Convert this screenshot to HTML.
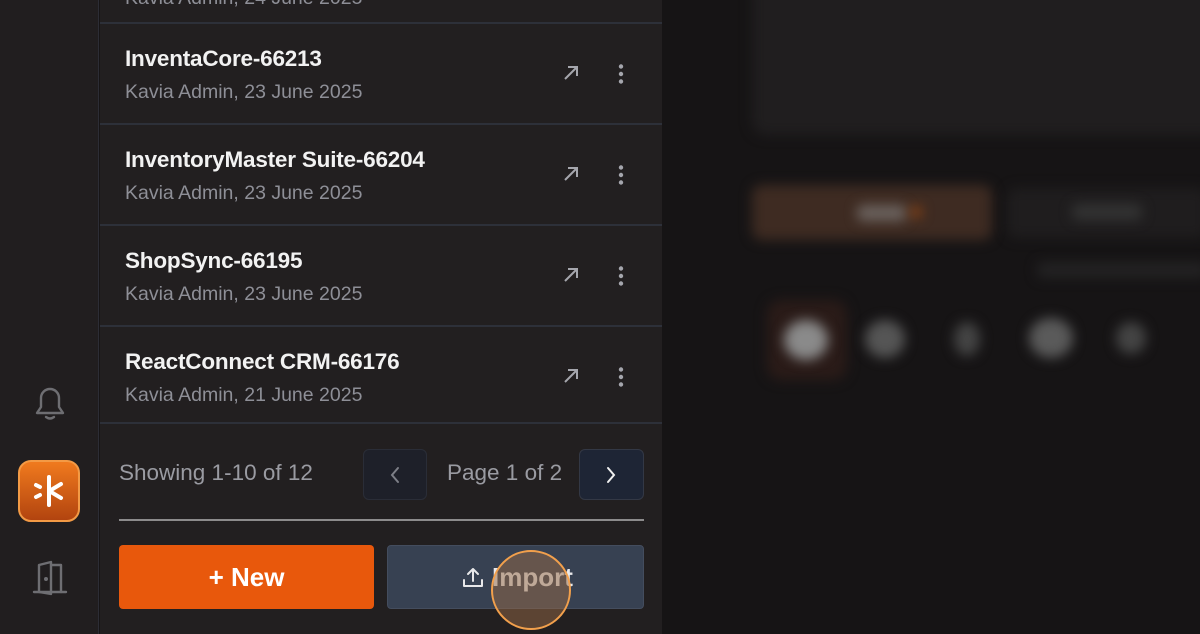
<!DOCTYPE html>
<html><head><meta charset="utf-8"><style>
*{margin:0;padding:0;box-sizing:border-box}
body{width:1200px;height:634px;overflow:hidden;background:#171516;font-family:"Liberation Sans",sans-serif;position:relative}
.side{position:absolute;left:0;top:0;width:99px;height:634px;background:#211e1f;border-right:1px solid #2c2d35}
.panel{position:absolute;left:100px;top:0;width:562px;height:634px;background:#221f20}
.row{position:absolute;left:0;width:562px;height:101px;border-bottom:2px solid #2d3039}
.t{position:absolute;left:25px;top:22px;color:#f2f2f2;font-size:22.5px;font-weight:bold;letter-spacing:-0.2px}
.s{position:absolute;left:25px;top:57px;color:#8e8f97;font-size:19.5px}
.ic{position:absolute;top:40px}
.right{position:absolute;left:662px;top:0;width:538px;height:634px;background:#161415;overflow:hidden}
.bl{filter:blur(6px);position:absolute}
</style></head><body>
<div class="side">
<svg style="position:absolute;left:31px;top:383px" width="38" height="40" viewBox="0 0 38 40" fill="none" stroke="#6e6e72" stroke-width="2.4" stroke-linecap="round" stroke-linejoin="round"><path d="M6 30 L32 30 L28 24 L28 15 A9 9 0 0 0 10 15 L10 24 Z"/><path d="M15 34 Q19 37 23 34"/></svg>
<div style="position:absolute;left:18px;top:460px;width:62px;height:62px;border-radius:13px;background:linear-gradient(#f07a1e,#b2440f);border:2px solid #f39a45"></div>
<svg style="position:absolute;left:18px;top:460px" width="62" height="62" viewBox="0 0 62 62" stroke="#fff" stroke-width="4" stroke-linecap="round"><path d="M31 17 L31 45"/><path d="M33 30 L43 24"/><path d="M33 32 L43 38"/><path d="M18 25 L22 27"/><path d="M18 37 L22 35"/></svg>
<svg style="position:absolute;left:31px;top:560px" width="38" height="36" viewBox="0 0 38 36" fill="none" stroke="#6e6e72" stroke-width="2.4" stroke-linecap="round" stroke-linejoin="round"><path d="M3 32 L35 32"/><path d="M8 32 L8 5 L20 2 L20 34 L8 32"/><path d="M20 5 L30 5 L30 32"/><circle cx="15" cy="19" r="0.8" fill="#6e6e72"/></svg>
</div>
<div class="panel">
<div style="position:absolute;left:25px;top:-13px;color:#8e8f97;font-size:19.5px">Kavia Admin, 24 June 2025</div>
<div style="position:absolute;left:0;top:22px;width:562px;height:2px;background:#2d3039"></div>
<div class="row" style="top:24px"><div class="t">InventaCore-66213</div><div class="s">Kavia Admin, 23 June 2025</div>
<svg class="ic" style="left:462px" width="18" height="18" viewBox="0 0 18 18" stroke="#a5a6ad" stroke-width="2" fill="none"><path d="M3 15 L15 3 M6 3 L15 3 L15 12"/></svg>
<svg class="ic" style="left:516px" width="10" height="20" viewBox="0 0 10 20" fill="#a5a6ad"><circle cx="5" cy="2.5" r="2.2"/><circle cx="5" cy="10" r="2.2"/><circle cx="5" cy="17.5" r="2.2"/></svg></div>
<div class="row" style="top:125px"><div class="t">InventoryMaster Suite-66204</div><div class="s">Kavia Admin, 23 June 2025</div>
<svg class="ic" style="left:462px" width="18" height="18" viewBox="0 0 18 18" stroke="#a5a6ad" stroke-width="2" fill="none"><path d="M3 15 L15 3 M6 3 L15 3 L15 12"/></svg>
<svg class="ic" style="left:516px" width="10" height="20" viewBox="0 0 10 20" fill="#a5a6ad"><circle cx="5" cy="2.5" r="2.2"/><circle cx="5" cy="10" r="2.2"/><circle cx="5" cy="17.5" r="2.2"/></svg></div>
<div class="row" style="top:226px"><div class="t">ShopSync-66195</div><div class="s">Kavia Admin, 23 June 2025</div>
<svg class="ic" style="left:462px" width="18" height="18" viewBox="0 0 18 18" stroke="#a5a6ad" stroke-width="2" fill="none"><path d="M3 15 L15 3 M6 3 L15 3 L15 12"/></svg>
<svg class="ic" style="left:516px" width="10" height="20" viewBox="0 0 10 20" fill="#a5a6ad"><circle cx="5" cy="2.5" r="2.2"/><circle cx="5" cy="10" r="2.2"/><circle cx="5" cy="17.5" r="2.2"/></svg></div>
<div class="row" style="top:327px;height:97px"><div class="t">ReactConnect CRM-66176</div><div class="s">Kavia Admin, 21 June 2025</div>
<svg class="ic" style="left:462px" width="18" height="18" viewBox="0 0 18 18" stroke="#a5a6ad" stroke-width="2" fill="none"><path d="M3 15 L15 3 M6 3 L15 3 L15 12"/></svg>
<svg class="ic" style="left:516px" width="10" height="20" viewBox="0 0 10 20" fill="#a5a6ad"><circle cx="5" cy="2.5" r="2.2"/><circle cx="5" cy="10" r="2.2"/><circle cx="5" cy="17.5" r="2.2"/></svg></div>
<div style="position:absolute;left:19px;top:460px;color:#9a9ba2;font-size:22.5px">Showing 1-10 of 12</div>
<div style="position:absolute;left:263px;top:449px;width:64px;height:51px;border-radius:6px;background:#1e2029;border:1px solid #2a2d37"></div>
<svg style="position:absolute;left:289px;top:466px" width="12" height="18" viewBox="0 0 12 18" stroke="#7d7f87" stroke-width="2" fill="none" stroke-linecap="round"><path d="M9 2 L3 9 L9 16"/></svg>
<div style="position:absolute;left:347px;top:460px;color:#9a9ba2;font-size:22.5px">Page 1 of 2</div>
<div style="position:absolute;left:479px;top:449px;width:65px;height:51px;border-radius:6px;background:#1e2535;border:1px solid #333845"></div>
<svg style="position:absolute;left:505px;top:466px" width="12" height="18" viewBox="0 0 12 18" stroke="#f0f0f0" stroke-width="2" fill="none" stroke-linecap="round"><path d="M3 2 L9 9 L3 16"/></svg>
<div style="position:absolute;left:19px;top:519px;width:525px;height:2px;background:#8c8b8c"></div>
<div style="position:absolute;left:19px;top:545px;width:255px;height:64px;border-radius:4px;background:#e8580c;color:#fff;font-size:26px;font-weight:bold;text-align:center;line-height:64px">+ New</div>
<div style="position:absolute;left:287px;top:545px;width:257px;height:64px;border-radius:4px;background:#374152;border:1px solid #444d5e;color:#e8e8ea;font-size:26px;font-weight:bold;line-height:62px;padding-left:104px">Import</div>
<svg style="position:absolute;left:361px;top:565px" width="24" height="24" viewBox="0 0 24 24" stroke="#e8e8ea" stroke-width="2" fill="none" stroke-linecap="round" stroke-linejoin="round"><path d="M3 15 L3 21 L21 21 L21 15"/><path d="M12 16 L12 4 M7 9 L12 4 L17 9"/></svg>
<div style="position:absolute;left:391px;top:550px;width:80px;height:80px;border-radius:50%;background:rgba(150,105,70,0.5);border:2px solid #f2a04c"></div>
</div>
<div class="right">
<div class="bl" style="left:90px;top:-20px;width:470px;height:155px;border-radius:14px;background:#201e1f"></div>
<div class="bl" style="left:90px;top:185px;width:240px;height:55px;border-radius:10px;background:#3e2b22"></div>
<div class="bl" style="left:195px;top:205px;width:50px;height:16px;border-radius:6px;background:#6b625e"></div>
<div class="bl" style="left:248px;top:206px;width:12px;height:12px;border-radius:50%;background:#8a4416"></div>
<div class="bl" style="left:345px;top:188px;width:200px;height:50px;border-radius:10px;background:#1f1d1e"></div>
<div class="bl" style="left:410px;top:204px;width:70px;height:16px;border-radius:6px;background:#333"></div>
<div class="bl" style="left:375px;top:262px;width:170px;height:16px;border-radius:6px;background:#232223"></div>
<div class="bl" style="left:105px;top:300px;width:80px;height:80px;border-radius:14px;background:#2a1b18"></div>
<div class="bl" style="left:122px;top:320px;width:44px;height:40px;border-radius:50%;background:#8a8a8a"></div>
<div class="bl" style="left:203px;top:320px;width:40px;height:38px;border-radius:50%;background:#555"></div>
<div class="bl" style="left:292px;top:322px;width:26px;height:34px;border-radius:50%;background:#444"></div>
<div class="bl" style="left:367px;top:318px;width:44px;height:40px;border-radius:50%;background:#5a5a5a"></div>
<div class="bl" style="left:454px;top:322px;width:30px;height:32px;border-radius:50%;background:#444"></div>
</div>
</body></html>
